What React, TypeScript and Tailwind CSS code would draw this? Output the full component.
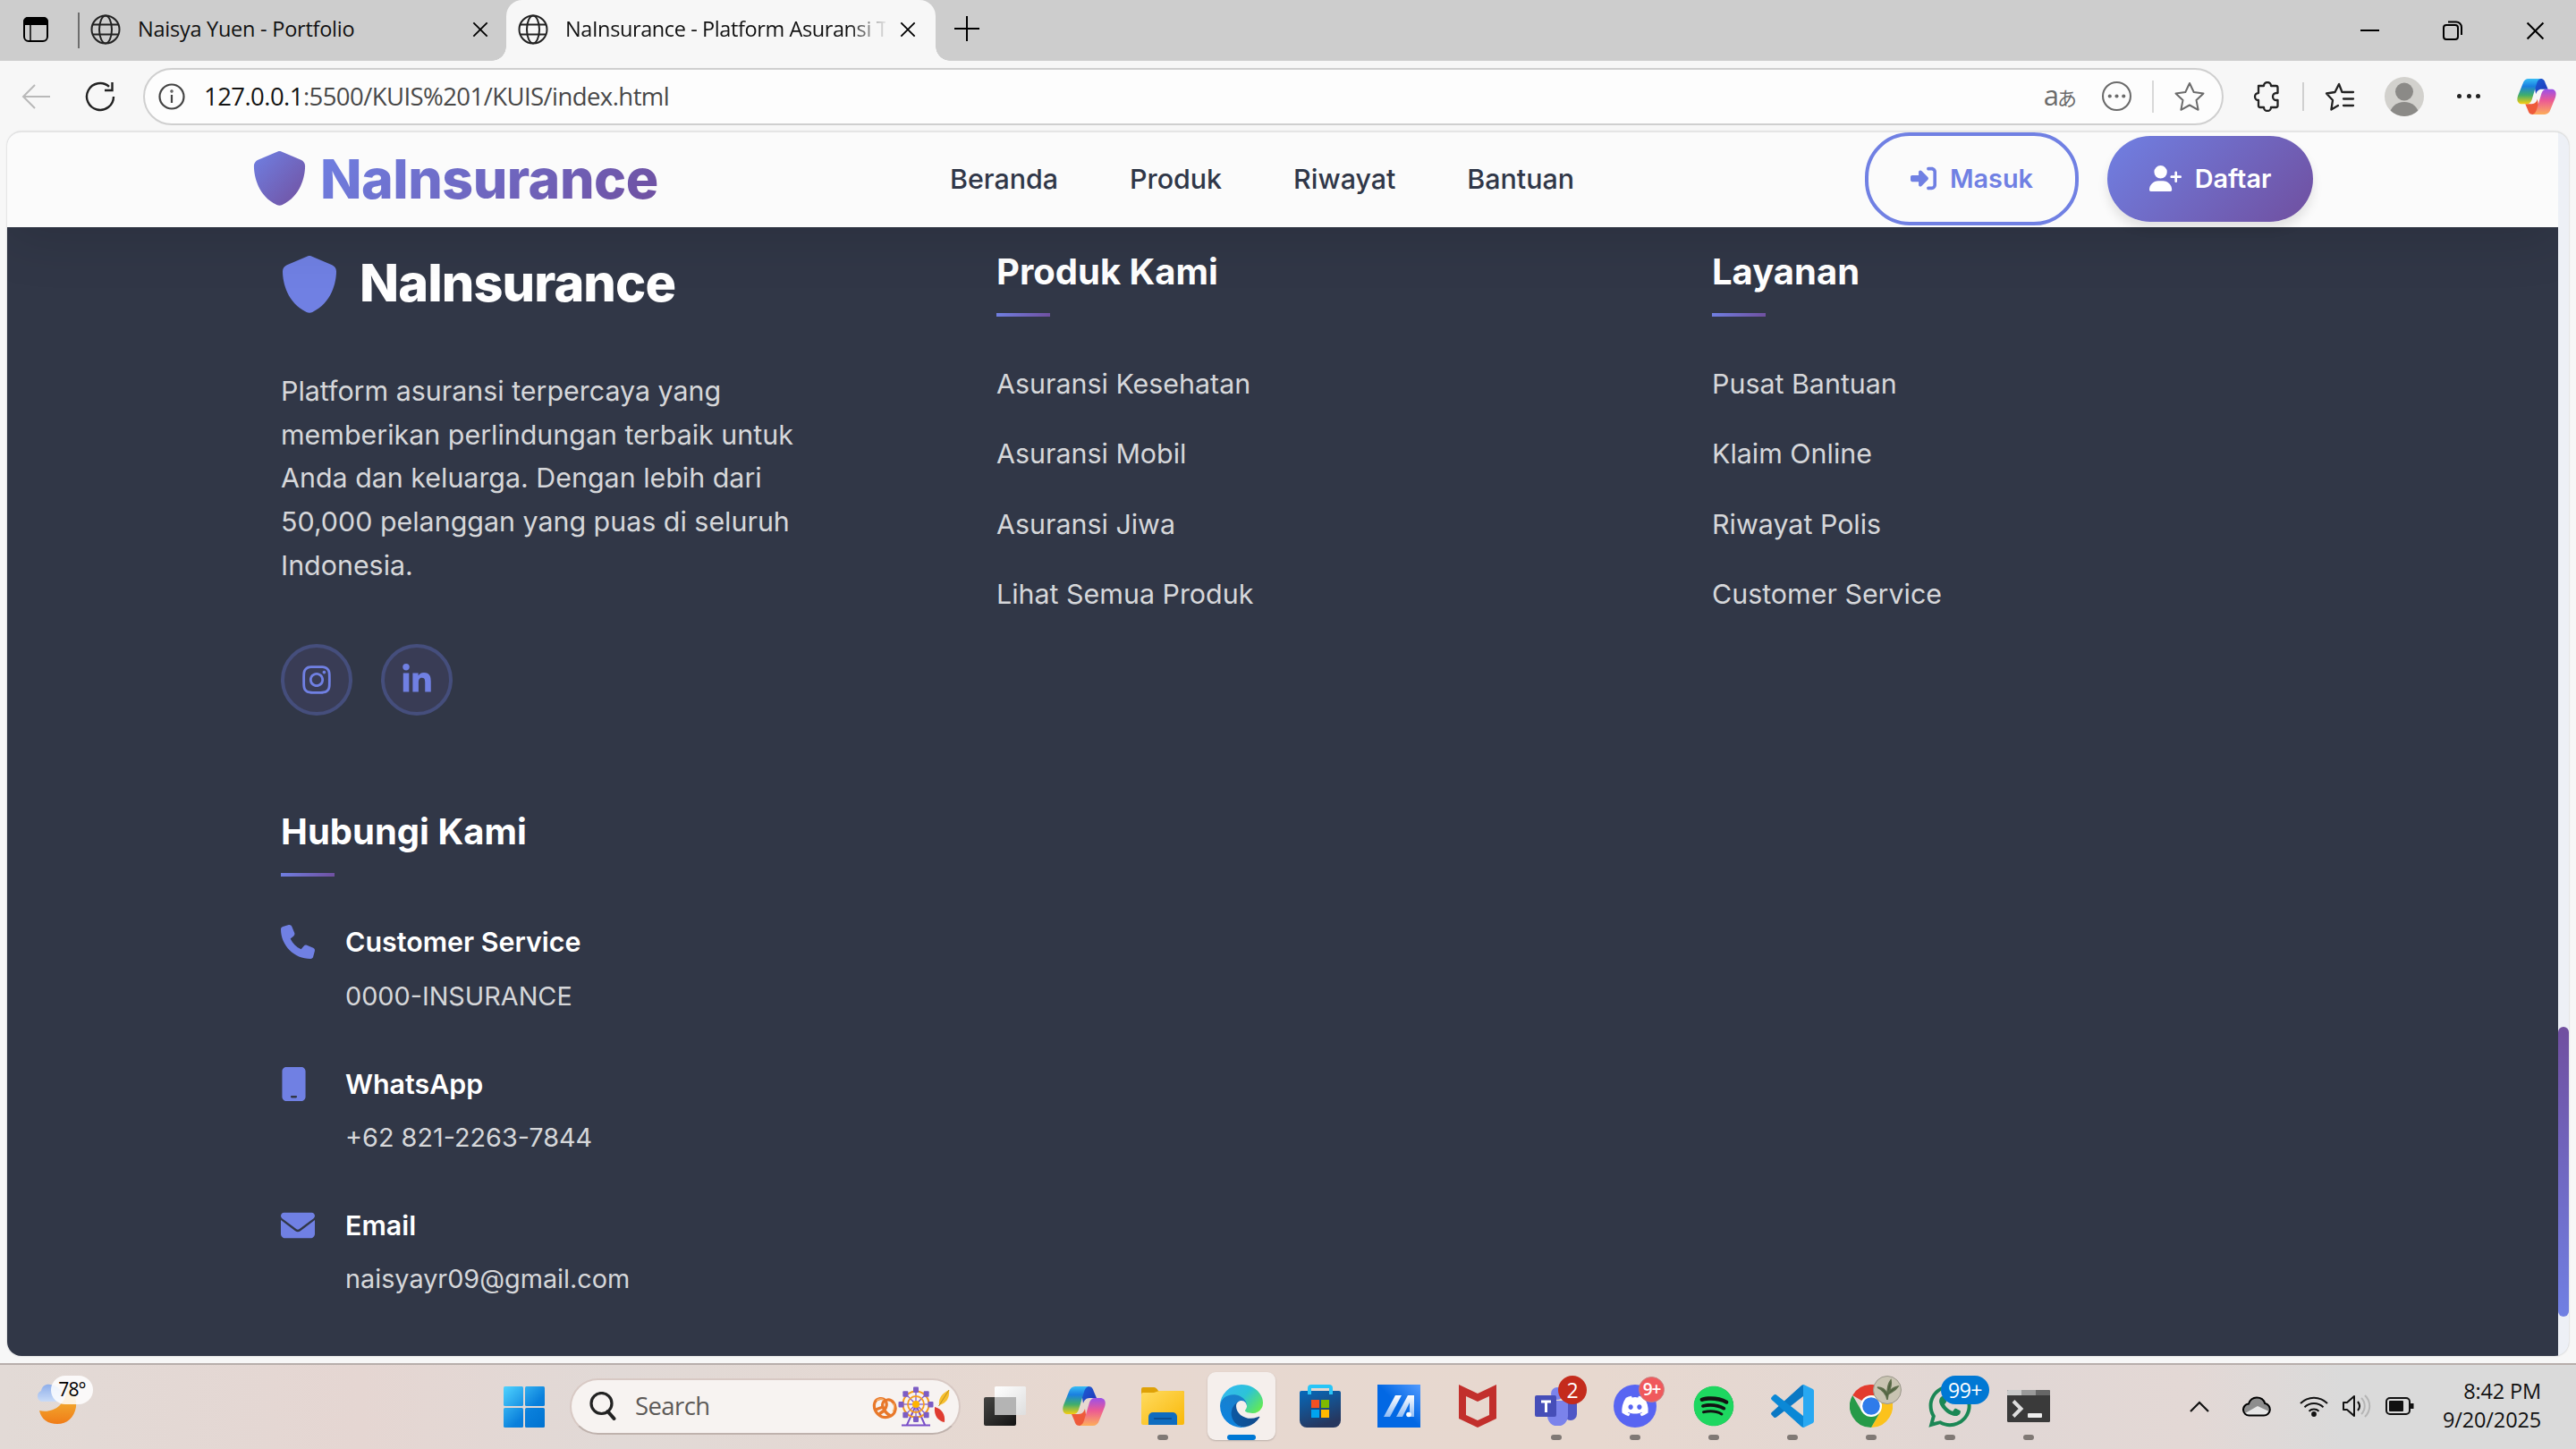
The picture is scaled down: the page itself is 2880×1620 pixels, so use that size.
import type { ReactNode } from 'react';
import {
  FaDiscord,
  FaEnvelope,
  FaInstagram,
  FaLinkedinIn,
  FaMobile,
  FaPhone,
  FaRightToBracket,
  FaShield,
  FaSpotify,
  FaUserPlus,
  FaWhatsapp,
} from 'react-icons/fa6';

/* ---------- shared icons ---------- */

function Globe() {
  return (
    <svg viewBox="0 0 34 34" className="h-[34px] w-[34px] shrink-0" fill="none" stroke="#222" strokeWidth="2">
      <circle cx="17" cy="17" r="15.5" />
      <ellipse cx="17" cy="17" rx="7" ry="15.5" />
      <path d="M3 11.5h28M3 22.5h28" />
    </svg>
  );
}

function Cross({ className }: { className: string }) {
  return (
    <svg viewBox="0 0 20 20" className={className} fill="none" stroke="#000" strokeWidth="2">
      <path d="M1.5 1.5l17 17M18.5 1.5l-17 17" />
    </svg>
  );
}

function CopilotIcon({ className, id }: { className: string; id: string }) {
  return (
    <svg viewBox="0 0 48 44" className={className}>
      <defs>
        <linearGradient id={`${id}a`} x1="0" y1="0" x2="0" y2="1">
          <stop offset="0" stopColor="#37bdf5" />
          <stop offset=".3" stopColor="#1a7fe0" />
          <stop offset=".65" stopColor="#3fae6c" />
          <stop offset="1" stopColor="#f8cd10" />
        </linearGradient>
        <linearGradient id={`${id}b`} x1="0" y1="0" x2="0" y2="1">
          <stop offset="0" stopColor="#9a50ea" />
          <stop offset=".45" stopColor="#ec5a94" />
          <stop offset="1" stopColor="#fdae5a" />
        </linearGradient>
        <linearGradient id={`${id}c`} x1="0" y1="0" x2="1" y2="1">
          <stop offset="0" stopColor="#1a62d8" />
          <stop offset="1" stopColor="#2233b5" />
        </linearGradient>
      </defs>
      <path d="M20 0h9c4 0 5 3 6 6l3 7h-8c-4 0-6 3-7 6z" fill={`url(#${id}c)`} />
      <path d="M28 44h-9c-4 0-5-3-6-6l-3-7h8c4 0 6-3 7-6z" fill="#ee5a3a" />
      <path d="M14 0h15c-3 1-4 3-5 6l-6 20c-1 3-3 5-6 5H6c-5 0-7-4-5-10L7 6c1.300-4 4-6 7-6z" fill={`url(#${id}a)`} />
      <path d="M34 44H19c3-1 4-3 5-6l6-20c1-3 3-5 6-5h6c5 0 7 4 5 10l-6 15c-1.300 4-4 6-7 6z" fill={`url(#${id}b)`} />
    </svg>
  );
}

/* ---------- browser chrome ---------- */

function TabStrip() {
  return (
    <div className="flex h-[68px] items-center bg-[#cdcdcd] text-[23.5px] tracking-[-0.4px] text-[#111]">
      <svg viewBox="0 0 30 30" className="-mt-[2px] ml-[25px] h-[30px] w-[30px] shrink-0" fill="none" stroke="#000" strokeWidth="2">
        <rect x="2" y="2" width="26" height="26" rx="5" />
        <path d="M2 9V6a4 4 0 014-4h18a4 4 0 014 4v3z" fill="#000" />
        <path d="M9 9v19" strokeWidth="1.500" />
      </svg>
      <div className="ml-[32px] h-10 w-[2px] bg-[#6e6e6e]" />
      <div className="ml-[12px] flex w-[465px] items-center pb-[3px]">
        <Globe />
        <span className="ml-[19px] whitespace-nowrap tracking-[-0.25px]">Naisya Yuen - Portfolio</span>
        <Cross className="ml-auto mr-[20px] h-[18px] w-[18px] shrink-0" />
      </div>
      <div className="relative flex h-full w-[480px] items-center rounded-t-[18px] bg-[#f7f7f7] pb-[3px] pl-[13px]">
        <div className="absolute -left-4 bottom-0 h-4 w-4 bg-[radial-gradient(circle_at_0_0,transparent_15.500px,#f7f7f7_16px)]" />
        <div className="absolute -right-4 bottom-0 h-4 w-4 bg-[radial-gradient(circle_at_100%_0,transparent_15.500px,#f7f7f7_16px)]" />
        <Globe />
        <div className="ml-[19px] w-[358px] whitespace-nowrap [mask-image:linear-gradient(90deg,#000_315px,transparent_362px)]">
          NaInsurance - Platform Asuransi T
        </div>
        <Cross className="ml-[16px] h-[18px] w-[18px] shrink-0" />
      </div>
      <svg viewBox="0 0 28 28" className="-mt-[5px] ml-[21px] h-[28px] w-[28px] shrink-0" stroke="#000" strokeWidth="2">
        <path d="M14 0v28M0 14h28" />
      </svg>
      <div className="ml-auto flex items-center gap-[71px] pr-[35px]">
        <div className="h-[2px] w-[21px] bg-black" />
        <svg viewBox="0 0 22 22" className="h-[22px] w-[22px]" fill="none" stroke="#000" strokeWidth="2">
          <rect x="1" y="5" width="16" height="16" rx="3" />
          <path d="M6 1.500h9a6 6 0 016 6V16" />
        </svg>
        <Cross className="h-[21px] w-[21px]" />
      </div>
    </div>
  );
}

function Toolbar() {
  return (
    <div className="flex h-[79px] items-center bg-[#f7f7f7]">
      <svg viewBox="0 0 32 28" className="ml-[24px] h-[28px] w-[32px] shrink-0" fill="none" stroke="#b9b9b9" strokeWidth="2">
        <path d="M15 1L2 14l13 13M2 14h30" />
      </svg>
      <svg viewBox="0 0 34 34" className="ml-[39px] h-[34px] w-[34px] shrink-0" fill="none" stroke="#222" strokeWidth="2.400">
        <path d="M32 17a15 15 0 11-5-11.200M30.500 1v9H22" />
      </svg>
      <div className="ml-[31px] flex h-[64px] w-[2326px] items-center rounded-full border-2 border-[#cfcfcf] bg-[#fdfdfd]">
        <svg viewBox="0 0 30 30" className="ml-[15px] h-[30px] w-[30px]" fill="none" stroke="#444" strokeWidth="2.200">
          <circle cx="15" cy="15" r="13.500" />
          <path d="M15 13v9" />
          <circle cx="15" cy="9" r=".6" />
        </svg>
        <div className="ml-[21px] text-[27.5px] tracking-[-0.57px] text-[#484848]">
          <span className="text-[#141414]">127.0.0.1</span>:5500/KUIS%201/KUIS/index.html
        </div>
        <div className="ml-auto flex items-center text-[#6b6b6b]">
          <div className="flex items-baseline pb-[3px]">
            <span className="text-[31px] leading-none">a</span>
            <span className="-ml-[2px] font-['Noto_Sans_CJK_JP'] text-[22px] leading-none">あ</span>
          </div>
          <svg viewBox="0 0 32 32" className="ml-[28px] h-[33px] w-[33px]" fill="none" stroke="currentColor" strokeWidth="2">
            <circle cx="16" cy="16" r="15" />
            <g fill="currentColor" stroke="none">
              <circle cx="8.500" cy="16" r="2" />
              <circle cx="16" cy="16" r="2" />
              <circle cx="23.500" cy="16" r="2" />
            </g>
          </svg>
          <div className="ml-[23px] h-9 w-[2px] bg-[#d8d8d8]" />
          <svg viewBox="0 0 34 34" className="ml-[23px] mr-[19px] h-[34px] w-[34px]" fill="none" stroke="currentColor" strokeWidth="2" strokeLinejoin="round">
            <path d="M17 2l4.700 10 10.800 1.400-8 7.500 2.100 10.900L17 26.500l-9.600 5.300 2.100-10.900-8-7.500L12.300 12z" />
          </svg>
        </div>
      </div>
      <svg viewBox="0 0 30 34" className="ml-[33px] h-[34px] w-[30px]" fill="none" stroke="#222" strokeWidth="2.300" strokeLinejoin="round">
        <path d="M6 5h6a4 4 0 018 0h5.500a2 2 0 012 2v6H26a4 4 0 000 8h1.500v6a2 2 0 01-2 2H20a4 4 0 01-8 0H8a2 2 0 01-2-2v-6a4 4 0 010-8z" />
      </svg>
      <div className="ml-[25px] h-8 w-[2px] bg-[#d0d0d0]" />
      <svg viewBox="0 0 34 34" className="ml-[23px] h-[34px] w-[34px]" fill="none" stroke="#222" strokeWidth="2.300" strokeLinecap="round" strokeLinejoin="round">
        <path d="M19.500 12L16 3l-4.500 9L2 13.500l7 7.500-1.600 10.500L15 27M21 12h11M21 19.500h11M21 27h11" />
      </svg>
      <svg viewBox="0 0 44 46" className="ml-[33px] h-[46px] w-[44px]">
        <defs>
          <clipPath id="avatar">
            <circle cx="22" cy="23" r="22" />
          </clipPath>
        </defs>
        <g clipPath="url(#avatar)">
          <rect width="44" height="46" fill="#d2d1cd" />
          <circle cx="22" cy="17.500" r="10" fill="#8b8a87" />
          <ellipse cx="22" cy="43" rx="16" ry="14" fill="#8b8a87" />
        </g>
      </svg>
      <div className="ml-[37px] flex gap-[5.500px]">
        <div className="h-[5px] w-[5px] rounded-full bg-[#222]" />
        <div className="h-[5px] w-[5px] rounded-full bg-[#222]" />
        <div className="h-[5px] w-[5px] rounded-full bg-[#222]" />
      </div>
      <CopilotIcon id="cpTop" className="ml-[41px] h-[40px] w-[44px]" />
    </div>
  );
}

/* ---------- page ---------- */

function SiteHeader() {
  return (
    <header className="relative z-10 flex h-[106px] shrink-0 items-center bg-[#fbfbfb] pb-[3px] pl-[274px] pr-[274px] shadow-[0_8px_64px_rgba(0,0,0,0.15)]">
      <svg width="0" height="0" className="absolute">
        <defs>
          <linearGradient id="brand" x1="0" y1="0" x2="1" y2="1">
            <stop offset="0" stopColor="#6f80e3" />
            <stop offset="1" stopColor="#72509f" />
          </linearGradient>
        </defs>
      </svg>
      <div className="flex w-[780px] items-center gap-[15px]">
        <FaShield fill="url(#brand)" className="h-[61px] w-[61px]" />
        <span className="bg-[linear-gradient(135deg,#6f80e3,#6f4f9f)] bg-clip-text text-[60.8px] font-extrabold leading-[80px] tracking-[-0.5px] text-transparent">
          NaInsurance
        </span>
      </div>
      <nav className="flex gap-[80px] pt-[2px] text-[30.4px] font-medium text-[#303748]">
        <span>Beranda</span>
        <span>Produk</span>
        <span>Riwayat</span>
        <span>Bantuan</span>
      </nav>
      <div className="ml-auto flex items-center gap-[32px] text-[28.8px] font-semibold">
        <div className="flex h-[104px] w-[239px] items-center justify-center gap-[15px] rounded-[50px] border-4 border-[#7080e3] text-[#7080e3]">
          <FaRightToBracket className="h-[29px] w-[29px]" />
          Masuk
        </div>
        <div className="flex h-[96px] w-[230px] items-center justify-center gap-[15px] rounded-[50px] bg-[linear-gradient(135deg,#7080e3,#704f9f)] text-white shadow-[0_8px_12px_rgba(0,0,0,0.10)]">
          <FaUserPlus className="h-[29px] w-[36px]" />
          Daftar
        </div>
      </div>
    </header>
  );
}

function Heading({ children }: { children: ReactNode }) {
  return (
    <div>
      <h4 className="pt-px text-[40px] font-bold leading-[48px] text-white">{children}</h4>
      <div className="mt-[22px] h-1 w-[60px] bg-[linear-gradient(135deg,#7080e3,#704f9f)]" />
    </div>
  );
}

function LinkColumn({ title, links }: { title: string; links: string[] }) {
  return (
    <div>
      <Heading>{title}</Heading>
      <ul className="mt-[51px] flex flex-col gap-[30.3px] text-[30.4px] leading-[48px] text-[#d6d7da]">
        {links.map((l) => (
          <li key={l}>{l}</li>
        ))}
      </ul>
    </div>
  );
}

function Contact({ icon, title, value }: { icon: ReactNode; title: string; value: string }) {
  return (
    <div className="flex">
      <div className="flex h-[48px] w-[72px] shrink-0 items-center text-[#7080e3]">{icon}</div>
      <div>
        <div className="text-[30.4px] font-semibold leading-[48px] text-white">{title}</div>
        <div className="mt-[12.5px] text-[28.8px] leading-[48px] text-[#d6d7da]">{value}</div>
      </div>
    </div>
  );
}

function Footer() {
  return (
    <footer className="grid flex-1 grid-cols-[640px_640px_640px] content-start gap-x-[160px] gap-y-[105px] bg-[#313747] pl-[306px] pt-[25px]">
      <div className="pt-[7px]">
        <div className="flex h-[64px] items-center gap-[24px]">
          <FaShield className="h-[64px] w-[64px] text-[#7080e3]" />
          <span className="pb-[3px] text-[57.6px] font-extrabold leading-[61px] tracking-[-0.9px] text-white">NaInsurance</span>
        </div>
        <p className="mt-[63px] text-[30.4px] leading-[48.64px] text-[#d6d7da]">
          Platform asuransi terpercaya yang
          <br />
          memberikan perlindungan terbaik untuk
          <br />
          Anda dan keluarga. Dengan lebih dari
          <br />
          50,000 pelanggan yang puas di seluruh
          <br />
          Indonesia.
        </p>
        <div className="mt-[64px] flex gap-[32px] text-[#7080e3]">
          <div className="flex h-[80px] w-[80px] items-center justify-center rounded-full border-4 border-[#454e7c] bg-[#393c55]">
            <FaInstagram className="h-[36px] w-[36px]" />
          </div>
          <div className="flex h-[80px] w-[80px] items-center justify-center rounded-full border-4 border-[#454e7c] bg-[#393c55]">
            <FaLinkedinIn className="h-[36px] w-[36px]" />
          </div>
        </div>
      </div>
      <LinkColumn title="Produk Kami" links={['Asuransi Kesehatan', 'Asuransi Mobil', 'Asuransi Jiwa', 'Lihat Semua Produk']} />
      <LinkColumn title="Layanan" links={['Pusat Bantuan', 'Klaim Online', 'Riwayat Polis', 'Customer Service']} />
      <div>
        <Heading>Hubungi Kami</Heading>
        <div className="mt-[49px] flex flex-col gap-[49.8px]">
          <Contact icon={<FaPhone className="h-[38px] w-[38px]" />} title="Customer Service" value="0000-INSURANCE" />
          <Contact icon={<FaMobile className="h-[38px] w-[29px]" />} title="WhatsApp" value="+62 821-2263-7844" />
          <Contact icon={<FaEnvelope className="h-[38px] w-[38px]" />} title="Email" value="naisyayr09@gmail.com" />
        </div>
      </div>
    </footer>
  );
}

/* ---------- taskbar ---------- */

function AppTile({ children, state, badge }: { children: ReactNode; state?: 'open' | 'active'; badge?: ReactNode }) {
  return (
    <div className="flex w-[88px] justify-center">
      <div
        className={
          state === 'active'
            ? 'relative flex h-[76px] w-[76px] items-center justify-center rounded-[9px] bg-[#f5efec] shadow-[0_1px_2px_rgba(0,0,0,0.2)]'
            : 'relative flex h-[76px] w-[76px] items-center justify-center'
        }
      >
        {children}
        {badge}
        {state === 'open' && <div className="absolute bottom-0 left-8 h-[6px] w-3 rounded-full bg-[#807975]" />}
        {state === 'active' && <div className="absolute bottom-0 left-[22px] h-[6px] w-8 rounded-full bg-[#0078d4]" />}
      </div>
    </div>
  );
}

function StartIcon() {
  return (
    <svg viewBox="0 0 46 46" className="h-[46px] w-[46px]">
      <defs>
        <linearGradient id="win" gradientUnits="userSpaceOnUse" x1="0" y1="0" x2="46" y2="46">
          <stop offset="0" stopColor="#4fd3ff" />
          <stop offset=".6" stopColor="#0a80dc" />
          <stop offset="1" stopColor="#0072d0" />
        </linearGradient>
      </defs>
      <g fill="url(#win)">
        <rect width="22" height="22" rx="1.500" />
        <rect x="24" width="22" height="22" rx="1.500" />
        <rect y="24" width="22" height="22" rx="1.500" />
        <rect x="24" y="24" width="22" height="22" rx="1.500" />
      </g>
    </svg>
  );
}

function SearchBox() {
  const spokes = [0, 45, 90, 135, 180, 225, 270, 315];
  return (
    <div className="flex h-[63px] w-[437px] items-center rounded-full border-2 border-[#d8c9c4] border-b-[#bfb2ad] bg-[#f7f3f1]">
      <svg viewBox="0 0 30 32" className="ml-[20px] h-[32px] w-[30px]" fill="none" stroke="#222" strokeWidth="3.200" strokeLinecap="round">
        <circle cx="13.500" cy="13" r="11.500" />
        <path d="M20.500 22l7 8" strokeWidth="4" />
      </svg>
      <span className="ml-[21px] text-[27.5px] tracking-[-0.6px] text-[#5c5957]">Search</span>
      <svg viewBox="0 0 88 46" className="ml-auto mr-[9px] h-[46px] w-[88px]" fill="none">
        <g stroke="#e8782a" strokeWidth="3.200" strokeLinecap="round" strokeLinejoin="round">
          <path d="M9 31c6-3 9-9 6-14-3-4-10-3-12 2-2 6 1 13 8 16 6 2 14-1 15-8 1-6-4-12-9-11-6 1-7 7-3 12 2 3 4 5 7 6" />
          <path d="M4 27l8-3" />
        </g>
        <path d="M5 17c2-2 5-3 8-1M24 20c1 3 1 6-1 9" stroke="#f7b26a" strokeWidth="1.300" />
        <g stroke="#7a4fc8" strokeWidth="2">
          <path d="M49 22L39 44M49 22l10 22M33 44.500h32" />
          {spokes.map((a) => (
            <path key={a} d="M49 21V6" transform={`rotate(${a} 49 21)`} strokeWidth="1.200" />
          ))}
        </g>
        <circle cx="49" cy="21" r="14.500" stroke="#f59d20" strokeWidth="2" />
        <circle cx="49" cy="21" r="9" stroke="#f59d20" strokeWidth="1.800" />
        <circle cx="49" cy="21" r="4" fill="#ffb400" />
        {spokes.map((a) => (
          <g key={a} transform={`rotate(${a} 49 21) translate(49 4.500) rotate(${-a})`}>
            <rect x="-3" y="-3" width="6" height="6.500" rx="1" fill="#7c5cc4" />
          </g>
        ))}
        <path d="M75 22c-1-8 3-13 11-17 1 9-3 15-11 17z" fill="#f7bf2e" />
        <path d="M74.500 23L86 5" stroke="#b98f1c" strokeWidth="1" />
        <path d="M70 24c8 2 12 8 11 17-7-1-12-7-11-17z" fill="#e03c31" />
      </svg>
    </div>
  );
}

function TaskView() {
  return (
    <svg viewBox="0 0 48 44" className="h-[44px] w-[48px]">
      <defs>
        <linearGradient id="tvDark" x1="0" y1="0" x2="1" y2="1">
          <stop offset="0" stopColor="#454543" />
          <stop offset="1" stopColor="#141414" />
        </linearGradient>
        <linearGradient id="tvLight" x1="0" y1="0" x2="1" y2="1">
          <stop offset="0" stopColor="#ffffff" />
          <stop offset="1" stopColor="#dedede" />
        </linearGradient>
      </defs>
      <rect y="12" width="36" height="32" rx="2" fill="url(#tvDark)" />
      <rect x="12" width="35" height="32" rx="1.500" fill="url(#tvLight)" />
      <rect x="12" y="12" width="24" height="20" fill="#b4b4b4" />
    </svg>
  );
}

function Explorer() {
  return (
    <svg viewBox="0 0 48 44" className="h-[44px] w-[48px]">
      <defs>
        <linearGradient id="fold" x1="0" y1="0" x2="1" y2="1">
          <stop offset="0" stopColor="#ffdb60" />
          <stop offset="1" stopColor="#f9b808" />
        </linearGradient>
      </defs>
      <path d="M0 3a2 2 0 012-2h12c2 0 3 1 5 4h27a2 2 0 012 2v10H0z" fill="#dfa106" />
      <path d="M0 9a2 2 0 012-2h12l6-2h26a2 2 0 012 2v34a2 2 0 01-2 2H2a2 2 0 01-2-2z" fill="url(#fold)" />
      <path d="M8 43V34a5 5 0 015-5h22a5 5 0 015 5v9z" fill="#0f6cbf" />
      <path d="M15 36h18" stroke="#0b4f93" strokeWidth="2.200" strokeLinecap="round" />
    </svg>
  );
}

function Edge() {
  return (
    <svg viewBox="0 0 256 256" className="h-[48px] w-[48px]">
      <defs>
        <linearGradient id="eg1" x1="0" y1="0" x2="1" y2="0">
          <stop offset="0" stopColor="#0c59a4" />
          <stop offset="1" stopColor="#114a8b" />
        </linearGradient>
        <linearGradient id="eg2" x1="0" y1="1" x2=".6" y2="0">
          <stop offset="0" stopColor="#0a84e4" />
          <stop offset="1" stopColor="#1b7fc8" />
        </linearGradient>
        <linearGradient id="eg3" x1="0" y1=".2" x2="1" y2=".8">
          <stop offset="0" stopColor="#35b8f1" />
          <stop offset=".5" stopColor="#2cc3d8" />
          <stop offset="1" stopColor="#66eb4e" />
        </linearGradient>
      </defs>
      <path d="M231 190.500c-3.400 1.800-6.900 3.400-10.500 4.700a101.500 101.500 0 01-35.900 6.500c-47.300 0-88.500-32.500-88.500-74.300 0-11.300 6.400-22.700 16.200-28.600-42.800 1.800-53.800 46.400-53.800 72.500 0 73.900 68.100 81.400 82.800 81.400 7.900 0 19.800-2.300 27-4.600l1.300-.4a128.300 128.300 0 0066.600-52.800 4 4 0 00-5.200-4.400z" fill="url(#eg1)" />
      <path d="M105.730 241.420a79.200 79.200 0 01-22.740-21.340 80.720 80.720 0 0129.530-120c3.120-1.470 8.450-4.130 15.540-4a32.350 32.350 0 0125.690 13 31.880 31.880 0 016.360 18.660c0-.21 24.460-79.600-80-79.600-43.900 0-80 41.660-80 78.210a130.150 130.150 0 0012.110 56 128 128 0 00156.380 67.110 75.550 75.550 0 01-62.780-8z" fill="url(#eg2)" />
      <path d="M152.330 148.860c-.81 1.050-3.300 2.500-3.300 5.660 0 2.610 1.700 5.120 4.720 7.230 14.380 10 41.490 8.680 41.560 8.680a59.560 59.560 0 0030.270-8.350 61.380 61.380 0 0030.430-52.880c.26-22.410-8-37.310-11.340-43.910C223.460 23.840 177.720 0 128 0A128 128 0 000 126.200c.48-36.540 36.800-66.050 80-66.050 3.500 0 23.460.34 42 10.070 16.340 8.580 24.900 18.940 30.850 29.210 6.180 10.670 7.280 24.150 7.280 29.520s-2.740 13.330-7.800 19.910z" fill="url(#eg3)" />
    </svg>
  );
}

function Store() {
  return (
    <svg viewBox="0 0 46 48" className="h-[48px] w-[46px]">
      <defs>
        <linearGradient id="bag" x1="0" y1="0" x2=".4" y2="1">
          <stop offset="0" stopColor="#0669bb" />
          <stop offset="1" stopColor="#26375f" />
        </linearGradient>
      </defs>
      <path d="M0 9a2 2 0 012-2h42a2 2 0 012 2v31a8 8 0 01-8 8H8a8 8 0 01-8-8z" fill="url(#bag)" />
      <path d="M11 11V4a2 2 0 012-2h20a2 2 0 012 2v7" fill="none" stroke="#28c5f7" strokeWidth="4" />
      <rect x="13" y="17" width="9" height="9" fill="#f25022" />
      <rect x="24" y="17" width="9" height="9" fill="#7fba00" />
      <rect x="13" y="28" width="9" height="9" fill="#00a4ef" />
      <rect x="24" y="28" width="9" height="9" fill="#ffb900" />
    </svg>
  );
}

function MyAsus() {
  return (
    <svg viewBox="0 0 48 48" className="h-[48px] w-[48px]">
      <defs>
        <linearGradient id="asus" x1=".5" y1=".5" x2="1" y2="0">
          <stop offset="0" stopColor="#0268e4" />
          <stop offset="1" stopColor="#539bff" />
        </linearGradient>
        <linearGradient id="asus2" x1="0" y1="1" x2="0" y2="0">
          <stop offset="0" stopColor="#8fbcf5" />
          <stop offset="1" stopColor="#ffffff" />
        </linearGradient>
      </defs>
      <rect width="48" height="48" fill="url(#asus)" />
      <path d="M20 12h7L14 36H7zM34 12h7v24h-5V20l-8 16h-7z" fill="url(#asus2)" />
      <circle cx="35" cy="33.500" r="2.800" fill="#fff" />
    </svg>
  );
}

function McAfee() {
  return (
    <svg viewBox="0 0 42 48" className="h-[48px] w-[42px]">
      <path fill="#c22f2c" fillRule="evenodd" d="M0 0l21 10L42 0v38L21 48 0 38zM8 13v21l13 6 13-6V13l-13 6z" />
    </svg>
  );
}

function Teams() {
  return (
    <svg viewBox="0 0 48 44" className="h-[44px] w-[48px]">
      <circle cx="42" cy="11" r="5" fill="#5059c9" />
      <path d="M32 17h13a2 2 0 012 2v12a7 7 0 01-14 0z" fill="#4f57c6" />
      <circle cx="25" cy="8" r="7" fill="#7b83eb" />
      <path d="M13 16h22a2 2 0 012 2v15a11 11 0 01-23 0z" fill="#7b83eb" />
      <rect y="10" width="24" height="24" rx="2" fill="#464eb8" />
      <path d="M7 17h11M12.500 17v12" stroke="#fff" strokeWidth="3" />
    </svg>
  );
}

function VSCode() {
  return (
    <svg viewBox="0 0 48 48" className="h-[48px] w-[48px]">
      <path d="M36 0v13L6 36.500c-1 .7-2 .6-2.800-.1L.8 34c-1-.9-1-2 0-3L34 1z" fill="#0a78c4" />
      <path d="M36 48V35L6 11.500c-1-.7-2-.6-2.800.1L.8 14c-1 .9-1 2 0 3L34 47z" fill="#0b88d6" />
      <path d="M34.500.7c.8-.8 1.600-.9 2.600-.4l9.300 4.400c1 .5 1.600 1.300 1.600 2.500v33.600c0 1.200-.6 2-1.600 2.500l-9.300 4.400c-1 .5-1.800.4-2.600-.4 1 .8 1.500 0 1.500-1.300V2c0-1.300-.5-2.100-1.500-1.300z" fill="#28a8f2" />
    </svg>
  );
}

function Chrome() {
  return (
    <svg viewBox="0 0 48 48" className="h-[48px] w-[48px]">
      <path d="M24 24L3.200 12A24 24 0 0144.800 12z" fill="#e33b2e" />
      <path d="M44.800 12H24v12l10.400 6L24 48A24 24 0 0044.800 12z" fill="#fcc21b" />
      <path d="M3.200 12l10.400 18 10.400 6 10.400-6L24 48A24 24 0 013.200 12z" fill="#269a48" />
      <circle cx="24" cy="24" r="12" fill="#fff" />
      <circle cx="24" cy="24" r="9.800" fill="#2f7bea" />
    </svg>
  );
}

function Terminal() {
  return (
    <svg viewBox="0 0 48 36" className="h-[36px] w-[48px]">
      <rect width="48" height="36" rx="1.500" fill="#3a3a3a" />
      <path d="M0 1.500A1.500 1.500 0 011.500 0H16v6H0z" fill="#cacaca" />
      <rect x="16" width="16" height="6" fill="#999" />
      <path d="M32 0h14.500A1.500 1.500 0 0148 1.500V6H32z" fill="#666" />
      <path d="M7 12.500l8.500 8.500L7 29.500" fill="none" stroke="#dedede" strokeWidth="4" />
      <rect x="23" y="26" width="16" height="5" rx="1" fill="#eee" />
    </svg>
  );
}

function Weather() {
  return (
    <div className="relative mb-[8px] h-[60px] w-[70px]">
      <svg viewBox="0 0 70 60" className="h-[60px] w-[70px]">
        <defs>
          <linearGradient id="moon" x1="0" y1="0" x2="0" y2="1">
            <stop offset="0" stopColor="#f3c53c" />
            <stop offset="1" stopColor="#f07c18" />
          </linearGradient>
          <linearGradient id="cloudy" x1="0" y1="0" x2="0" y2="1">
            <stop offset="0" stopColor="#8eaeea" />
            <stop offset="1" stopColor="#c9dbf7" />
          </linearGradient>
        </defs>
        <path d="M6 29a6.500 6.500 0 010-12c1-6 6-8 10-7 5 0 8 3 12 6v13z" fill="url(#cloudy)" />
        <path d="M35 12c8 5 11 14 10 23-2 12-10 19-21 19-10 0-18-5-20-15 8 2 17 0 23-6 5-5 8-12 8-21z" fill="url(#moon)" />
      </svg>
      <div className="absolute left-[17px] top-0 flex h-8 w-[47px] items-center justify-center rounded-full bg-white/85 text-[21px] tracking-[-0.8px] text-black">
        78°
      </div>
    </div>
  );
}

function Taskbar() {
  return (
    <div className="flex h-[96px] items-center border-t-2 border-[#b7aeab] bg-[linear-gradient(90deg,#e2dad6_0%,#e5d6d2_14%,#e1d9d6_24%,#e7d8d0_42%,#e7d8cf_62%,#e1d7d5_78%,#e3d8d5_85%,#dadada_91%,#dadada_100%)] pb-[2px]">
      <div className="flex w-[542px] pl-[40px]">
        <Weather />
      </div>
      <div className="flex w-[88px] justify-center pt-[2px]">
        <StartIcon />
      </div>
      <div className="w-[450px] pl-[7px]">
        <SearchBox />
      </div>
      <AppTile>
        <TaskView />
      </AppTile>
      <AppTile>
        <CopilotIcon id="cpBar" className="h-[44px] w-[48px]" />
      </AppTile>
      <AppTile state="open">
        <Explorer />
      </AppTile>
      <AppTile state="active">
        <Edge />
      </AppTile>
      <AppTile>
        <Store />
      </AppTile>
      <AppTile>
        <MyAsus />
      </AppTile>
      <AppTile>
        <McAfee />
      </AppTile>
      <AppTile
        state="open"
        badge={
          <div className="absolute left-[40px] top-[4px] flex h-8 w-8 items-center justify-center rounded-full bg-[#c42b1c] text-[23px] leading-none text-white">
            2
          </div>
        }
      >
        <Teams />
      </AppTile>
      <AppTile
        state="open"
        badge={
          <div className="absolute left-[42px] top-[5px] flex h-[29px] w-[29px] items-center justify-center rounded-full border border-[#c98080] bg-[#f0595c] text-[19px] font-semibold leading-none tracking-[-1px] text-white">
            9+
          </div>
        }
      >
        <div className="flex h-[48px] w-[48px] items-center justify-center rounded-full bg-[#5865f2]">
          <FaDiscord className="h-[32px] w-[32px] text-white" />
        </div>
      </AppTile>
      <AppTile state="open">
        <div className="flex h-[44px] w-[44px] items-center justify-center rounded-full bg-[#121212]">
          <FaSpotify className="h-[46px] w-[46px] shrink-0 text-[#1ed760]" />
        </div>
      </AppTile>
      <AppTile state="open">
        <VSCode />
      </AppTile>
      <AppTile
        state="open"
        badge={
          <svg viewBox="0 0 32 32" className="absolute left-[40px] top-[4px] h-8 w-8">
            <circle cx="16" cy="16" r="15.500" fill="#c9c4b2" stroke="#9b978b" />
            <path d="M16 27c-1-7-5-11-11-14 6 0 9 3 11 7 0-6 1-11 4-15 1 5 0 9-3 14 3-4 6-6 11-7-3 5-7 6-11 9z" fill="#4b5f3d" stroke="#5e6e4c" strokeWidth="1.500" />
          </svg>
        }
      >
        <Chrome />
      </AppTile>
      <AppTile
        state="open"
        badge={
          <div className="absolute left-[28px] top-[4px] flex h-8 w-[54px] items-center justify-center rounded-full bg-[#0078d4] text-[23px] leading-none tracking-[-0.5px] text-white">
            99+
          </div>
        }
      >
        <FaWhatsapp className="h-[54px] w-[54px] text-[#1b8755]" />
      </AppTile>
      <AppTile state="open">
        <Terminal />
      </AppTile>
      <div className="ml-auto flex items-center pr-[39px]">
        <svg viewBox="0 0 22 13" className="h-[13px] w-[22px]" fill="none" stroke="#111" strokeWidth="2.200">
          <path d="M1 12L11 2l10 10" />
        </svg>
        <svg viewBox="0 0 32 23" className="ml-[37px] h-[23px] w-[32px]">
          <path d="M8 21.500a6.500 6.500 0 01-1-13C8.500 4 12 1.500 16 1.500c4.500 0 8 2.500 9.200 6.500a6.800 6.800 0 01-1.200 13.500z" fill="#8d8d8d" />
          <path d="M3 19l14-8 13 6c-1 3-3 4.500-6 4.500H8c-2 0-4-1-5-2.500z" fill="#e6e6e6" />
          <path d="M8 21.500a6.500 6.500 0 01-1-13C8.500 4 12 1.500 16 1.500c4.500 0 8 2.500 9.200 6.500a6.800 6.800 0 01-1.200 13.500z" fill="none" stroke="#000" strokeWidth="2" />
        </svg>
        <svg viewBox="0 0 32 24" className="ml-[32px] h-[24px] w-[32px]" fill="none" stroke="#111" strokeWidth="2">
          <path d="M1 9a21 21 0 0130 0M5.500 13.300a15 15 0 0121 0M10.500 17.800a8 8 0 0111 0" />
          <circle cx="16" cy="21" r="1.900" fill="#111" />
        </svg>
        <svg viewBox="0 0 32 26" className="ml-[16px] h-[26px] w-[32px]" fill="none" stroke="#111" strokeWidth="2" strokeLinejoin="round">
          <path d="M1 9h4l8-7v22l-8-7H1z" />
          <path d="M17 8c2.500 3 2.500 7 0 10" />
          <path d="M21 4c5 5 5 13 0 18M25 1c7 7 7 17 0 24" stroke="#b5b5b5" />
        </svg>
        <svg viewBox="0 0 32 20" className="ml-[16px] h-[20px] w-[32px]">
          <rect x="1" y="1" width="26" height="18" rx="4" fill="none" stroke="#111" strokeWidth="2" />
          <rect x="4" y="4" width="16" height="12" rx="1" fill="#111" />
          <path d="M28 7h3.500v6H28z" fill="#111" />
        </svg>
        <div className="ml-[29px] w-[113px] pb-[2px] text-right text-[23.5px] leading-[32px] tracking-[-0.15px] text-[#111]">
          <div>8:42 PM</div>
          <div>9/20/2025</div>
        </div>
      </div>
    </div>
  );
}

export default function App() {
  return (
    <div className="flex h-[1620px] w-[2880px] flex-col overflow-hidden bg-[#f7f7f7] font-['Open_Sans',sans-serif]">
      <TabStrip />
      <Toolbar />
      <div className="h-[1377px] bg-[#f7f7f7] px-[8px] pb-[8px]">
        <div className="flex h-full overflow-hidden rounded-[16px] border-t border-[#e4e4e4] bg-[#edf0f6] shadow-[0_0_2px_rgba(0,0,0,0.25)]">
          <div className="flex w-[2852px] flex-col overflow-hidden font-['Inter',sans-serif]">
            <SiteHeader />
            <Footer />
          </div>
          <div className="w-[12px] pt-[1000px]">
            <div className="h-[324px] w-[12px] rounded-full bg-[linear-gradient(180deg,#704f9f,#7080e3)]" />
          </div>
        </div>
      </div>
      <Taskbar />
    </div>
  );
}
